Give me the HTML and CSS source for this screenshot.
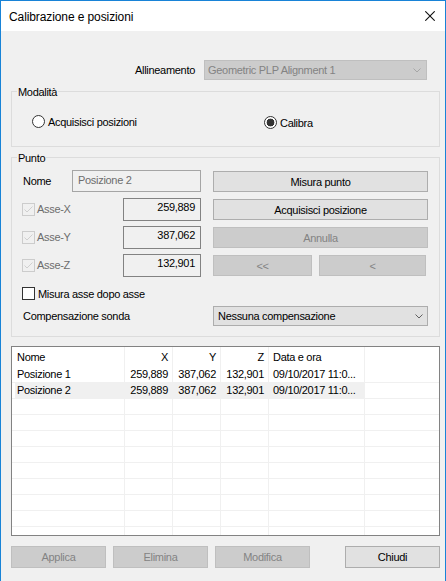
FILE: index.html
```html
<!DOCTYPE html>
<html>
<head>
<meta charset="utf-8">
<link rel="stylesheet" href="styles.css">
</head>
<body>
<div class="window">
  <div class="titlebar">
    <span class="title">Calibrazione e posizioni</span>
    <svg class="close" width="10" height="10" viewBox="0 0 10 10"><path d="M0.3 0.3L9.7 9.7M9.7 0.3L0.3 9.7" stroke="#111" stroke-width="1.1" fill="none"/></svg>
  </div>
  <div class="content">
    <div class="align-row">
      <span>Allineamento</span>
      <div class="combo combo-align disabled">
        <span>Geometric PLP Alignment 1</span>
        <svg width="8" height="5" viewBox="0 0 8 5"><polyline points="0.5,0.5 4,4 7.5,0.5" fill="none" stroke="#a6a6a6" stroke-width="1"/></svg>
      </div>
    </div>

    <div class="group group-mode">
      <div class="legend">Modalità</div>
      <div class="radio-row">
        <div class="radio radio-first"><span class="radio-circle"></span><span>Acquisisci posizioni</span></div>
        <div class="radio checked"><span class="radio-circle"></span><span>Calibra</span></div>
      </div>
    </div>

    <div class="group group-point">
      <div class="legend">Punto</div>
      <div class="point-grid">
        <div class="field-row"><span>Nome</span><div class="textbox">Posizione 2</div></div>
        <div class="btn">Misura punto</div>

        <div class="field-row"><div class="check-label disabled"><span class="checkbox"><svg width="11" height="11" viewBox="0 0 11 11"><polyline points="1.5,5.5 4,8 9.5,2.5" fill="none" stroke="#cfcfcf" stroke-width="1"/></svg></span><span>Asse-X</span></div><div class="valbox">259,889</div></div>
        <div class="btn">Acquisisci posizione</div>

        <div class="field-row"><div class="check-label disabled"><span class="checkbox"><svg width="11" height="11" viewBox="0 0 11 11"><polyline points="1.5,5.5 4,8 9.5,2.5" fill="none" stroke="#cfcfcf" stroke-width="1"/></svg></span><span>Asse-Y</span></div><div class="valbox">387,062</div></div>
        <div class="btn disabled">Annulla</div>

        <div class="field-row"><div class="check-label disabled"><span class="checkbox"><svg width="11" height="11" viewBox="0 0 11 11"><polyline points="1.5,5.5 4,8 9.5,2.5" fill="none" stroke="#cfcfcf" stroke-width="1"/></svg></span><span>Asse-Z</span></div><div class="valbox">132,901</div></div>
        <div class="nav-btns">
          <div class="btn disabled btn-first">&lt;&lt;</div>
          <div class="btn disabled btn-prev">&lt;</div>
        </div>
      </div>
      <div class="check-row"><div class="check-label"><span class="checkbox"></span><span class="check-text">Misura asse dopo asse</span></div></div>
      <div class="comp-row">
        <span>Compensazione sonda</span>
        <div class="combo combo-comp">
          <span>Nessuna compensazione</span>
          <svg width="8" height="5" viewBox="0 0 8 5"><polyline points="0.5,0.5 4,4 7.5,0.5" fill="none" stroke="#606060" stroke-width="1"/></svg>
        </div>
      </div>
    </div>

    <div class="table">
      <div class="trow thead">
        <div class="c c1">Nome</div><div class="c num">X</div><div class="c num">Y</div><div class="c num">Z</div><div class="c c5">Data e ora</div><div class="c c6"></div>
      </div>
      <div class="trow">
        <div class="c c1">Posizione 1</div><div class="c num">259,889</div><div class="c num">387,062</div><div class="c num">132,901</div><div class="c c5">09/10/2017 11:0...</div><div class="c c6"></div>
      </div>
      <div class="trow selected">
        <div class="c c1">Posizione 2</div><div class="c num">259,889</div><div class="c num">387,062</div><div class="c num">132,901</div><div class="c c5">09/10/2017 11:0...</div><div class="c c6"></div>
      </div>
      <div class="trow"><div class="c c1"></div><div class="c"></div><div class="c"></div><div class="c"></div><div class="c"></div><div class="c c6"></div></div>
      <div class="trow"><div class="c c1"></div><div class="c"></div><div class="c"></div><div class="c"></div><div class="c"></div><div class="c c6"></div></div>
      <div class="trow"><div class="c c1"></div><div class="c"></div><div class="c"></div><div class="c"></div><div class="c"></div><div class="c c6"></div></div>
      <div class="trow"><div class="c c1"></div><div class="c"></div><div class="c"></div><div class="c"></div><div class="c"></div><div class="c c6"></div></div>
      <div class="trow"><div class="c c1"></div><div class="c"></div><div class="c"></div><div class="c"></div><div class="c"></div><div class="c c6"></div></div>
      <div class="trow"><div class="c c1"></div><div class="c"></div><div class="c"></div><div class="c"></div><div class="c"></div><div class="c c6"></div></div>
      <div class="trow"><div class="c c1"></div><div class="c"></div><div class="c"></div><div class="c"></div><div class="c"></div><div class="c c6"></div></div>
      <div class="trow"><div class="c c1"></div><div class="c"></div><div class="c"></div><div class="c"></div><div class="c"></div><div class="c c6"></div></div>
      <div class="trow"><div class="c c1"></div><div class="c"></div><div class="c"></div><div class="c"></div><div class="c"></div><div class="c c6"></div></div>
    </div>

    <div class="bottom-buttons">
      <div class="btn disabled bb">Applica</div>
      <div class="btn disabled bb">Elimina</div>
      <div class="btn disabled bb">Modifica</div>
      <div class="btn bb bb-close">Chiudi</div>
    </div>
  </div>
</div>
</body>
</html>
```
FILE: styles.css
```css
html, body {
  margin: 0;
  padding: 0;
  background: #ffffff;
}

.window {
  width: 446px;
  height: 581px;
  box-sizing: border-box;
  border: 1px solid #1883d7;
  border-bottom: none;
  background: #f0f0f0;
  font-family: "Liberation Sans", Arial, sans-serif;
  font-size: 11px;
  letter-spacing: -0.3px;
  color: #000;
  display: flex;
  flex-direction: column;
  overflow: hidden;
}

.titlebar {
  height: 30px;
  flex-shrink: 0;
  background: #ffffff;
  display: flex;
  align-items: center;
  justify-content: space-between;
  padding: 0 10px 0 8px;
}

.title {
  font-size: 12px;
  letter-spacing: -0.1px;
  padding-top: 1px;
}

.close {
  display: block;
}

.content {
  padding: 0 5px 0 10px;
  display: flex;
  flex-direction: column;
}

.align-row {
  margin-top: 29px;
  height: 20px;
  display: flex;
  justify-content: flex-end;
  align-items: center;
  gap: 9px;
  padding-right: 13px;
}

.combo {
  height: 20px;
  box-sizing: border-box;
  border: 1px solid #adadad;
  background: #e1e1e1;
  display: flex;
  align-items: center;
  justify-content: space-between;
}

.combo svg {
  display: block;
}

.combo.disabled {
  background: #cccccc;
  border-color: #bfbfbf;
  color: #838383;
}

.combo-align {
  width: 223px;
  padding: 0 5px 0 3px;
}

.combo-comp {
  width: 215px;
  padding: 0 4px 0 4px;
}

.group {
  border: 1px solid #dcdcdc;
  box-sizing: border-box;
}

.legend {
  width: fit-content;
  height: 14px;
  line-height: 14px;
  margin: -7px 0 -7px 5px;
  padding: 0 1px;
  background: #f0f0f0;
}

.group-mode {
  margin-top: 11px;
  height: 56px;
}

.radio-row {
  margin-top: 21px;
  margin-left: 20px;
  height: 17px;
  display: flex;
  align-items: center;
}

.radio {
  display: flex;
  align-items: center;
  gap: 3px;
}

.radio-first {
  width: 232px;
}

.radio.checked {
  margin-top: 2px;
}

.radio-circle {
  width: 13px;
  height: 13px;
  box-sizing: border-box;
  border: 1px solid #333333;
  border-radius: 50%;
  background: #ffffff;
}

.radio.checked .radio-circle {
  background: radial-gradient(circle, #333333 0, #333333 3.6px, #ffffff 4.2px);
}

.group-point {
  margin-top: 10px;
  height: 180px;
}

.point-grid {
  margin: 12px 11px 0 11px;
  display: grid;
  grid-template-columns: 178px 215px;
  column-gap: 12px;
  row-gap: 6px;
  grid-auto-rows: 22px;
}

.field-row {
  display: flex;
  align-items: center;
  justify-content: space-between;
}

.textbox {
  width: 129px;
  height: 22px;
  box-sizing: border-box;
  border: 1px solid #a5a5a5;
  background: #f0f0f0;
  color: #6d6d6d;
  padding: 3px 0 0 5px;
  line-height: 13px;
}

.valbox {
  width: 78px;
  height: 23px;
  box-sizing: border-box;
  border: 1px solid #828282;
  background: #f0f0f0;
  text-align: right;
  padding: 2px 5px 0 0;
  line-height: 13px;
}

.check-label {
  display: flex;
  align-items: center;
  gap: 3px;
  margin-left: -1px;
}

.check-label.disabled {
  color: #6d6d6d;
  gap: 2px;
}

.checkbox {
  width: 13px;
  height: 13px;
  box-sizing: border-box;
  border: 1px solid #333333;
  background: #ffffff;
  display: flex;
  align-items: center;
  justify-content: center;
}

.checkbox svg {
  display: block;
}

.check-label.disabled .checkbox {
  border-color: #cccccc;
  background: #f0f0f0;
}

.btn {
  box-sizing: border-box;
  height: 21px;
  border: 1px solid #adadad;
  background: #e1e1e1;
  display: flex;
  align-items: center;
  justify-content: center;
  align-self: end;
}

.btn.disabled {
  background: #cccccc;
  border-color: #bfbfbf;
  color: #838383;
}

.nav-btns {
  display: flex;
  gap: 7px;
  align-self: end;
}

.btn-first {
  width: 99px;
}

.btn-prev {
  width: 107px;
}

.check-row {
  margin: 11px 11px 0 11px;
  height: 13px;
  display: flex;
  align-items: center;
}

.comp-row {
  margin: 6px 11px 0 11px;
  height: 20px;
  display: grid;
  grid-template-columns: 178px 215px;
  column-gap: 12px;
  align-items: center;
}

.table {
  margin-top: 9px;
  height: 190px;
  box-sizing: border-box;
  border: 1px solid #828282;
  background: #ffffff;
  overflow: hidden;
}

.trow {
  display: grid;
  grid-template-columns: 113px 48px 48px 48px 96px 1fr;
  height: 16px;
}

.trow.thead {
  height: 20px;
}

.c {
  box-sizing: border-box;
  border-right: 1px solid #f0f0f0;
  border-bottom: 1px solid #f0f0f0;
  line-height: 15px;
  white-space: nowrap;
  overflow: hidden;
}

.thead .c {
  border-bottom: none;
  line-height: 20px;
}

.c1 {
  padding-left: 5px;
}

.num {
  text-align: right;
  padding-right: 4px;
}

.c5 {
  padding-left: 4px;
}

.c6 {
  border-right: none;
}

.selected .c {
  background: #f0f0f0;
}

.selected .c1 {
  background: linear-gradient(to right, #ffffff 0, #ffffff 3px, #f0f0f0 3px);
}

.selected .c6 {
  background: #ffffff;
}

.bottom-buttons {
  margin-top: 10px;
  height: 22px;
  display: flex;
  gap: 7px;
}

.bb {
  width: 95px;
  height: 22px;
}

.bb-close {
  margin-left: auto;
}
```
